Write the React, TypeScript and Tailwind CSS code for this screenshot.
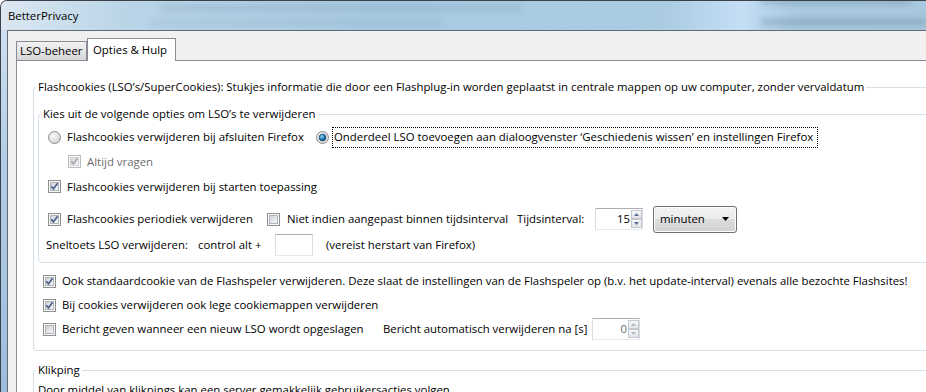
import React from "react";

function CheckBox({ checked = false, disabled = false }: { checked?: boolean; disabled?: boolean }) {
  return (
    <svg width="13" height="13" viewBox="0 0 13 13" className="shrink-0">
      <defs>
        <linearGradient id="cbIn" x1="0" y1="0" x2="1" y2="1">
          <stop offset="0" stopColor="#cdd1d7" />
          <stop offset="1" stopColor="#f7f7f7" />
        </linearGradient>
      </defs>
      <rect x="0.5" y="0.5" width="12" height="12" fill="#f8f8f8" stroke={disabled ? "#bcbcbc" : "#8e8f8f"} />
      <rect x="2.5" y="2.5" width="8" height="8" fill="url(#cbIn)" stroke={disabled ? "#d6d6d6" : "#b0b4ba"} />
      {checked && (
        <path
          d="M3.3 6.3 L5.4 8.9 L9.6 3.3"
          fill="none"
          stroke={disabled ? "#a4a9b2" : "#4a5d8c"}
          strokeWidth="1.7"
        />
      )}
    </svg>
  );
}

function Radio({ checked = false }: { checked?: boolean }) {
  return (
    <svg width="13" height="13" viewBox="0 0 13 13" className="shrink-0">
      <defs>
        <radialGradient id="rdBg" cx="0.4" cy="0.35" r="0.75">
          <stop offset="0" stopColor="#f9f9f9" />
          <stop offset="1" stopColor="#cfcfcf" />
        </radialGradient>
        <radialGradient id="rdDot" cx="0.4" cy="0.35" r="0.7">
          <stop offset="0" stopColor="#9ad8f6" />
          <stop offset="0.55" stopColor="#2b7cb5" />
          <stop offset="1" stopColor="#0d3b62" />
        </radialGradient>
      </defs>
      <circle cx="6.5" cy="6.5" r="6" fill="url(#rdBg)" stroke="#8c8c8c" />
      {checked && <circle cx="6.5" cy="6.5" r="3.4" fill="url(#rdDot)" stroke="#123f66" strokeWidth="0.6" />}
    </svg>
  );
}

function SpinBtn({ up = false, dim = false }: { up?: boolean; dim?: boolean }) {
  return (
    <div className="flex-1 flex items-center justify-center border border-[#c3c7ce] bg-[linear-gradient(#f7f7f7,#e2e4e8)]">
      <svg width="5" height="3" viewBox="0 0 5 3">
        <path d={up ? "M0 3 L2.5 0 L5 3 Z" : "M0 0 L2.5 3 L5 0 Z"} fill={dim ? "#b5b8bd" : "#5a6f96"} />
      </svg>
    </div>
  );
}

function Spinner({ value, dim = false }: { value: string; dim?: boolean }) {
  return (
    <div className="flex h-[22px] w-[48px] shrink-0 border border-t-[#abadb3] border-l-[#dbdde4] border-r-[#dbdde4] border-b-[#e3e9ef] bg-white">
      <span className={`flex-1 text-right leading-[20px] pr-[1px] ${dim ? "text-[#6d6d6d]" : ""}`}>{value}</span>
      <div className="flex flex-col w-[11px] py-[1px]">
        <SpinBtn up dim={dim} />
        <SpinBtn dim={dim} />
      </div>
    </div>
  );
}

export default function App() {
  return (
    <div className="font-['Open_Sans','Noto_Sans',sans-serif] text-[11.4px] leading-[16px] text-black w-[926px] h-[392px] overflow-hidden flex flex-col border-t border-l border-[#3c4148] rounded-tl-[7px] bg-[linear-gradient(#d4e3f0,#b3cde6_40%,#9dbddd)]">
      {/* title bar, with the blurred desktop behind the glass */}
      <div className="relative h-[29px] shrink-0 flex items-center pl-[7px] bg-[linear-gradient(90deg,#dbe7f1_0%,#b9d4e7_14%,#a8cae2_40%,#abcce3_72%,#c4def4_80%,#a9cae1_86%,#a8c8df_100%)] overflow-hidden">
        <div className="absolute left-[160px] top-[4px] w-[360px] h-[6px] bg-[#6f8aa3] opacity-25 blur-[3px]" />
        <div className="absolute left-[150px] top-[19px] w-[290px] h-[5px] bg-[#7590a8] opacity-20 blur-[3px]" />
        <div className="absolute left-[760px] top-[-2px] w-[150px] h-[5px] bg-[#54708c] opacity-35 blur-[3px]" />
        <div className="absolute left-[760px] top-[18px] w-[166px] h-[6px] bg-[#54708c] opacity-35 blur-[3px]" />
        <span className="relative">BetterPrivacy</span>
      </div>

      {/* client */}
      <div className="flex-1 ml-[6px] border-l border-t border-[#5f6c78] bg-[#f0f0f0] pl-[8px] pt-[7px] flex flex-col">
        <div className="flex items-end h-[22px] shrink-0">
          <div className="w-[71px] h-[19px] border border-b-0 border-[#898c95] bg-[linear-gradient(#f2f2f2,#e4e4e4_50%,#d6d6d6)] flex items-center pl-[3px]">
            LSO-beheer
          </div>
          <div className="relative z-10 -mb-px w-[89px] h-[23px] border border-b-0 border-[#898c95] bg-white flex items-center pl-[5px]">
            Opties &amp; Hulp
          </div>
        </div>

        <div className="flex-1 border-l border-t border-[#898c95] bg-white pl-[16px] pt-[18px]">
          <fieldset className="w-[1000px] border border-[#d5dfe5] rounded-[3px] pl-[2px] pb-[9px]">
            <legend className="px-[2px]">
              Flashcookies (LSO’s/SuperCookies): Stukjes informatie die door een Flashplug-in worden geplaatst in centrale mappen op uw computer, zonder vervaldatum
            </legend>

            <fieldset className="mt-[11px] ml-[2px] border border-[#d5dfe5] rounded-[3px] pl-[2px] pt-[3px] pb-[11px]">
              <legend className="px-[2px]">Kies uit de volgende opties om LSO’s te verwijderen</legend>

              <div className="h-[24px] flex items-center pl-[7px]">
                <div className="w-[268px] flex items-center gap-[6px] shrink-0 whitespace-nowrap">
                  <Radio />
                  <span>Flashcookies verwijderen bij afsluiten Firefox</span>
                </div>
                <Radio checked />
                <span className="ml-[3px] h-[21px] w-[486px] border border-dotted border-black pl-[1px] flex items-center whitespace-nowrap">
                  Onderdeel LSO toevoegen aan dialoogvenster ‘Geschiedenis wissen’ en instellingen Firefox
                </span>
              </div>

              <div className="h-[25px] flex items-center pl-[27px] gap-[6px] text-[#6d6d6d]">
                <CheckBox checked disabled />
                <span>Altijd vragen</span>
              </div>

              <div className="h-[25px] flex items-center pl-[7px] gap-[6px]">
                <CheckBox checked />
                <span>Flashcookies verwijderen bij starten toepassing</span>
              </div>

              <div className="h-[40px] flex items-center pl-[7px] whitespace-nowrap">
                <div className="w-[219px] shrink-0 flex items-center gap-[6px]">
                  <CheckBox checked />
                  <span>Flashcookies periodiek verwijderen</span>
                </div>
                <div className="w-[250px] shrink-0 flex items-center gap-[7px]">
                  <CheckBox />
                  <span>Niet indien aangepast binnen tijdsinterval</span>
                </div>
                <span className="w-[78px] shrink-0">Tijdsinterval:</span>
                <Spinner value="15" />
                <div className="ml-[10px] w-[84px] h-[27px] shrink-0 rounded-[3px] border border-[#707070] bg-[linear-gradient(#f2f2f2,#ebebeb_50%,#dddddd_50%,#cfcfcf)] flex items-center justify-between pl-[6px] pr-[7px] shadow-[inset_0_0_0_1px_#fcfcfc]">
                  <span>minuten</span>
                  <svg width="7" height="4" viewBox="0 0 7 4">
                    <path d="M0 0 L7 0 L3.5 4 Z" fill="#000" />
                  </svg>
                </div>
              </div>

              <div className="h-[12px] flex items-center pl-[5px] whitespace-nowrap">
                <span className="w-[152px] shrink-0">Sneltoets LSO verwijderen:</span>
                <span className="w-[77px] shrink-0">control alt +</span>
                <div className="w-[38px] h-[22px] shrink-0 border border-t-[#abadb3] border-l-[#dbdde4] border-r-[#dbdde4] border-b-[#e3e9ef] bg-white" />
                <span className="ml-[13px]">(vereist herstart van Firefox)</span>
              </div>
            </fieldset>

            <div className="mt-[6px] h-[24px] flex items-center pl-[7px] gap-[6px] whitespace-nowrap">
              <CheckBox checked />
              <span>
                Ook standaardcookie van de Flashspeler verwijderen. Deze slaat de instellingen van de Flashspeler op (b.v. het update-interval) evenals alle bezochte Flashsites!
              </span>
            </div>
            <div className="h-[24px] flex items-center pl-[7px] gap-[6px]">
              <CheckBox checked />
              <span>Bij cookies verwijderen ook lege cookiemappen verwijderen</span>
            </div>
            <div className="h-[24px] flex items-center pl-[7px] whitespace-nowrap">
              <div className="w-[340px] shrink-0 flex items-center gap-[6px]">
                <CheckBox />
                <span>Bericht geven wanneer een nieuw LSO wordt opgeslagen</span>
              </div>
              <span className="w-[209px] shrink-0">Bericht automatisch verwijderen na [s]</span>
              <Spinner value="0" dim />
            </div>
          </fieldset>

          <fieldset className="mt-[11px] w-[1000px] border border-[#d5dfe5] rounded-[3px] pl-[2px] pt-[4px] pb-[10px]">
            <legend className="px-[2px]">Klikping</legend>
            <p className="ml-[2px]">Door middel van klikpings kan een server gemakkelijk gebruikersacties volgen</p>
          </fieldset>
        </div>
      </div>
    </div>
  );
}
